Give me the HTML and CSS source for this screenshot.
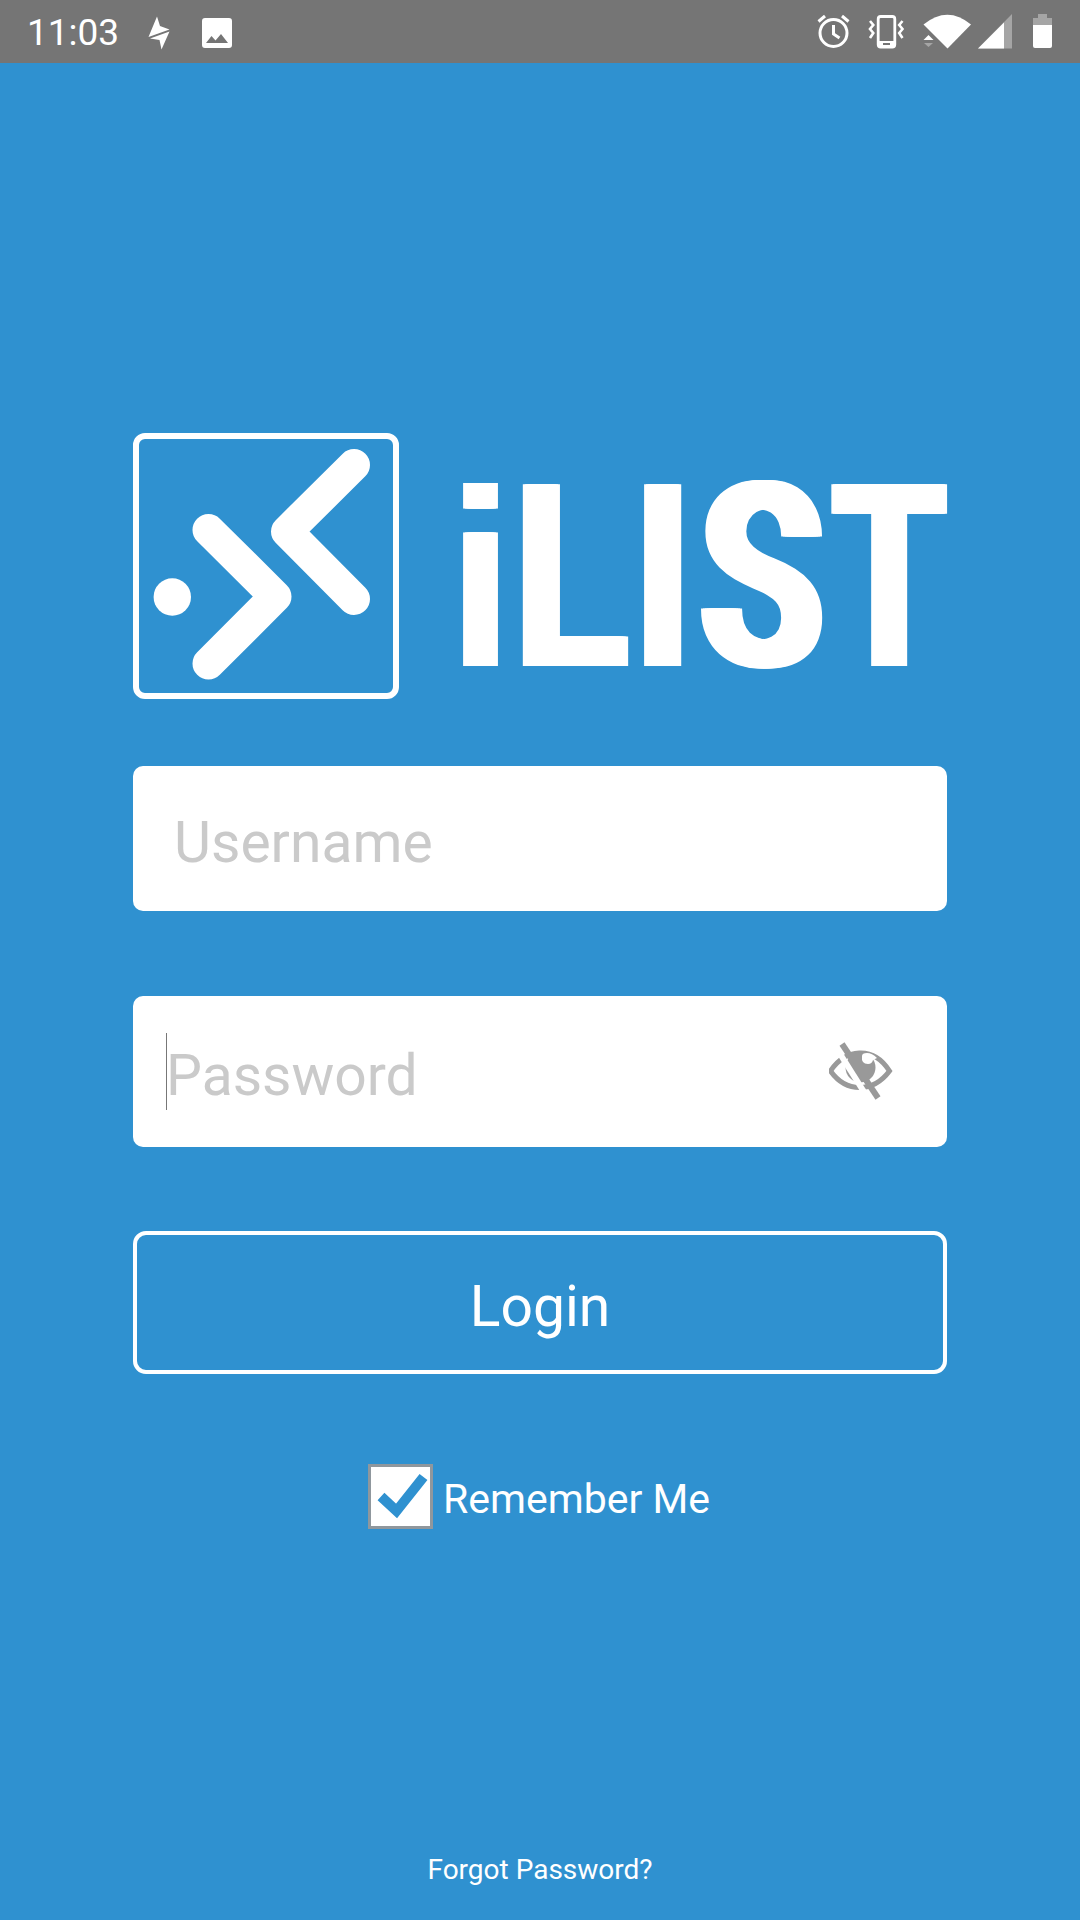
FILE: index.html
```html
<!DOCTYPE html>
<html lang="en">
<head>
    <meta charset="utf-8">
    <title>iLIST Login</title>
    <link rel="stylesheet" href="styles.css">
</head>
<body>
    <div class="status-bar">
        <span class="time">11:03</span>
        <svg class="notifications" width="90" height="40" viewBox="140 10 90 40" fill="#fff">
            <path d="M157 14.500 L160 24 L169.500 27.500 L148.500 35 Z"/>
            <path d="M169.500 29.500 L161.500 47.500 L159.500 38 L150 36.500 Z"/>
            <path fill-rule="evenodd" d="M205 16h24q3 0 3 3v24q0 3-3 3h-24q-3 0-3-3v-24q0-3 3-3zM206 41h22l-7-9-5.500 6.500-4-4.500z"/>
        </svg>
        <svg class="system-icons" width="244" height="40" viewBox="812 12 244 40" fill="#fff">
            <!-- alarm -->
            <g fill="none" stroke="#fff" stroke-width="3">
                <circle cx="833.500" cy="33" r="13.500"/>
                <path d="M833.500 25v9l6 4M818.500 21.500l6.500-5.500M848.500 21.500l-6.500-5.500"/>
            </g>
            <!-- vibrate -->
            <rect x="878.200" y="16.500" width="16.600" height="30.500" rx="2.500" fill="none" stroke="#fff" stroke-width="2.800"/>
            <path d="M878 41h17v6h-17z"/>
            <path d="M883 43h7v2h-7z" fill="#757575"/>
            <path d="M870 21l3.300 4-3.300 4 3.300 4-3.300 5M902.500 21l-3.300 4 3.300 4-3.300 4 3.300 5" fill="none" stroke="#fff" stroke-width="2.600"/>
            <!-- wifi -->
            <path d="M923.500 24.500Q947.500 5 971 24.500L947.500 48.500z"/>
            <path d="M923.500 40l5-5 5 5z"/>
            <path d="M924 43h9l-4.500 4z" fill="#a5a5a5"/>
            <!-- signal -->
            <path d="M1012 14v34.500h-34z" fill="#a5a5a5"/>
            <path d="M1004 22.500v26h-26z"/>
            <!-- battery -->
            <path d="M1033 26v-8h5v-4h9v4h5v8z" fill="#a5a5a5"/>
            <path d="M1033 25h19v21q0 2-2 2h-15q-2 0-2-2z"/>
        </svg>
    </div>

    <div class="login">
        <div class="brand">
            <div class="logo">
                <svg width="254" height="254" viewBox="139 439 254 254" fill="none" stroke="#fff" stroke-width="32" stroke-linecap="round" stroke-linejoin="round">
                    <circle cx="172.300" cy="597" r="18.700" fill="#fff" stroke="none"/>
                    <path d="M208.500 530l67 66.500-67 67"/>
                    <path d="M354 465l-67 66.500 67 67.500"/>
                </svg>
            </div>
            <h1><span class="i">i</span>LI<span class="s">S</span><span class="t">T</span></h1>
        </div>

        <form>
            <div class="field">
                <input type="text" placeholder="Username">
            </div>
            <div class="field password">
                <span class="caret"></span>
                <input type="password" placeholder="Password">
                <svg class="eye" width="66" height="60" viewBox="829 1042 66 60">
                    <path d="M830.500 1071C845 1049 873 1045 889.500 1071C873 1093 846 1093 830.500 1071z" fill="none" stroke="#999" stroke-width="5"/>
                    <circle cx="860.500" cy="1067.500" r="15" fill="#999"/>
                    <path d="M862 1056q-1 8 6 8 4 0 5-4l4-2q-5-5-10-5-5 0-5 3z" fill="#fff"/>
                    <path d="M837 1049l34 54" stroke="#fff" stroke-width="6"/>
                    <path d="M842 1044l36 54" stroke="#999" stroke-width="6"/>
                </svg>
            </div>
            <button type="button">Login</button>
            <label class="remember">
                <span class="checkbox">
                    <svg width="59" height="59" viewBox="371 1467 59 59">
                        <path d="M381 1496.500l15.500 14.500 27-34" fill="none" stroke="#2f91d0" stroke-width="10"/>
                    </svg>
                </span>
                <span class="label">Remember Me</span>
            </label>
        </form>

        <a class="forgot">Forgot Password?</a>
    </div>
</body>
</html>
```
FILE: styles.css
```css
* {
    box-sizing: border-box;
}
body {
    margin: 0;
    height: 1920px;
    display: flex;
    flex-direction: column;
    background-color: #2f91d0;
    color: white;
    font-family: Roboto, sans-serif;
    overflow: hidden;
}
.status-bar {
    height: 63px;
    padding: 0 24px 0 27px;
    display: flex;
    align-items: center;
    background-color: #757575;
}
.time {
    width: 113px;
    font-size: 37px;
    padding-top: 2px;
}
.notifications {
    overflow: visible;
}
.system-icons {
    margin-left: auto;
}
.login {
    flex: 1;
    width: 814px;
    margin: 0 auto;
    padding-top: 370px;
    display: flex;
    flex-direction: column;
}
.brand {
    display: flex;
    align-items: center;
    height: 266px;
    margin-bottom: 67px;
}
.logo {
    width: 266px;
    height: 266px;
    flex: none;
    border: 6px solid white;
    border-radius: 12px;
}
.logo svg {
    display: block;
}
h1 {
    width: 0;
    margin: 22px 0 0 57px;
    font-family: "Liberation Sans", sans-serif;
    font-size: 264px;
    font-weight: bold;
    line-height: 266px;
    letter-spacing: 12px;
    white-space: nowrap;
    transform: scaleX(0.7);
    transform-origin: 0 0;
    /* thickens the stems sideways only */
    text-shadow: 2.5px 0 white, -2.5px 0 white, 5px 0 white, -5px 0 white, 7.5px 0 white, -7.5px 0 white;
}
h1 .i {
    font-size: 253px;
    margin-right: 3px;
}
h1 .s {
    display: inline-block;
    font-family: Roboto, sans-serif;
    font-size: 258px;
    transform: scaleX(1.11);
    margin: 0 9px 0 14px;
}
h1 .t {
    display: inline-block;
    transform: scaleX(0.97);
}
form {
    display: flex;
    flex-direction: column;
}
.field {
    height: 145px;
    padding: 8px 41px 0;
    margin-bottom: 85px;
    display: flex;
    align-items: center;
    background-color: white;
    border-radius: 10px;
}
.field.password {
    height: 151px;
    padding: 0 52px 0 33px;
    margin-bottom: 84px;
}
input {
    flex: 1;
    min-width: 0;
    padding: 0;
    border: none;
    outline: none;
    background: none;
    font-family: inherit;
    font-size: 57px;
}
.password input {
    padding-top: 8px;
}
input::placeholder {
    color: #cacaca;
}
.caret {
    width: 1px;
    height: 77px;
    margin-right: -1px;
    background-color: #777;
}
button {
    height: 143px;
    padding: 8px 0 0;
    border: 4px solid white;
    border-radius: 13px;
    background: none;
    color: white;
    font-family: inherit;
    font-size: 57px;
}
.remember {
    margin-top: 90px;
    display: flex;
    align-items: center;
    justify-content: center;
    gap: 10px;
    font-size: 41px;
    line-height: 65px;
}
.remember .label {
    height: 65px;
    padding-top: 3px;
    margin-right: 2px;
}
.checkbox {
    width: 65px;
    height: 65px;
    border: 3px solid #8f979d;
    background-color: white;
}
.checkbox svg {
    display: block;
}
.forgot {
    margin: auto auto 34px;
    font-size: 28px;
}
```
